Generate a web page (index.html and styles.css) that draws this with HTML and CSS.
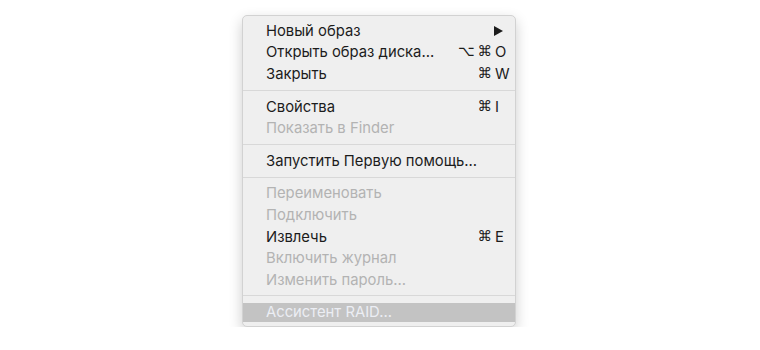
FILE: index.html
```html
<!DOCTYPE html>
<html lang="ru">
<head>
    <meta charset="UTF-8">
    <title>Дисковая утилита — Файл</title>
    <link rel="stylesheet" href="styles.css">
</head>
<body>
<div class="menu">
    <div class="item"><span class="label">Новый образ</span><span class="arrow"></span></div>
    <div class="item"><span class="label">Открыть образ диска...</span><span class="keys"><span class="mod">⌥⌘</span><span class="key">O</span></span></div>
    <div class="item"><span class="label">Закрыть</span><span class="keys"><span class="mod">⌘</span><span class="key">W</span></span></div>
    <div class="sep"></div>
    <div class="item"><span class="label">Свойства</span><span class="keys"><span class="mod">⌘</span><span class="key">I</span></span></div>
    <div class="item disabled"><span class="label">Показать в Finder</span></div>
    <div class="sep"></div>
    <div class="item"><span class="label">Запустить Первую помощь...</span></div>
    <div class="sep"></div>
    <div class="item disabled"><span class="label">Переименовать</span></div>
    <div class="item disabled"><span class="label">Подключить</span></div>
    <div class="item"><span class="label">Извлечь</span><span class="keys"><span class="mod">⌘</span><span class="key">E</span></span></div>
    <div class="item disabled"><span class="label">Включить журнал</span></div>
    <div class="item disabled"><span class="label">Изменить пароль...</span></div>
    <div class="sep last"></div>
    <div class="item selected"><span class="label">Ассистент RAID...</span></div>
</div>
</body>
</html>
```

FILE: styles.css
```css
body {
    margin: 0;
    background-color: #ffffff;
    font-family: Inter, "Liberation Sans", "DejaVu Sans", sans-serif;
    font-size: 14.8px;
    color: #1c1c1c;
}

.menu {
    width: 274px;
    margin: 15px 0 0 242px;
    padding: 4px 0 4px;
    box-sizing: border-box;
    background-color: #efefef;
    border: 1px solid #d2d2d2;
    border-radius: 5px;
    box-shadow: 0 5px 14px rgba(0, 0, 0, 0.2);
}

.item {
    display: flex;
    align-items: center;
    justify-content: space-between;
    height: 21.6px;
    padding: 0 6px 0 23px;
}

.disabled {
    color: #b3b3b3;
}

.selected {
    height: 19px;
    background-color: #c3c3c3;
    color: #eceef4;
}

.keys {
    display: flex;
}

.mod {
    text-align: right;
    font-family: "DejaVu Sans", sans-serif;
    font-size: 14.5px;
    letter-spacing: 3px;
}

.key {
    width: 14px;
}

.arrow {
    width: 0;
    height: 0;
    margin-right: 6px;
    border-top: 5px solid transparent;
    border-bottom: 5px solid transparent;
    border-left: 9px solid #1c1c1c;
}

.sep {
    height: 1px;
    margin: 5px 0 5px;
    background-color: #d8d8d8;
}

.sep.last {
    margin: 4px 0 7px;
}
```
